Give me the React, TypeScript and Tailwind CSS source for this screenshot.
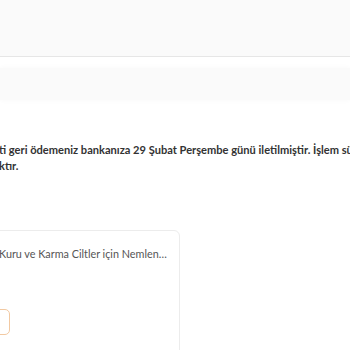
export default function App() {
  return (
    <div className="relative h-[350px] w-[350px] overflow-hidden bg-white font-['Lato','Open_Sans',sans-serif]">
      <div className="h-[57px] border-b border-[#e6e6e6] bg-[#fafafa]" />
      <div className="mt-[11px] h-[32px] bg-[#fafafa] shadow-[0_0_6px_rgba(0,0,0,0.03)]" />

      <div className="mt-[42px] text-[11.1px] font-bold leading-[16px] text-[#333] whitespace-nowrap">
        <p className="-ml-[1px]">ti geri ödemeniz bankanıza 29 Şubat Perşembe günü iletilmiştir. İşlem süresi bankanıza bağlıdır.</p>
        <p className="-ml-[1px]">ktır.</p>
      </div>

      <div className="mt-[56px] -ml-[40px] h-[140px] w-[220px] rounded-[6px] border border-[#ececec] bg-white pl-[38px] pt-[15px]">
        <p className="text-[10.8px] leading-[16px] text-[#555] whitespace-nowrap">
          Kuru ve Karma Ciltler için Nemlen…
        </p>
        <div className="mt-[47px] -ml-[60px] h-[26px] w-[71px] rounded-[5px] border border-[#f2c9a2]" />
      </div>
    </div>
  );
}
